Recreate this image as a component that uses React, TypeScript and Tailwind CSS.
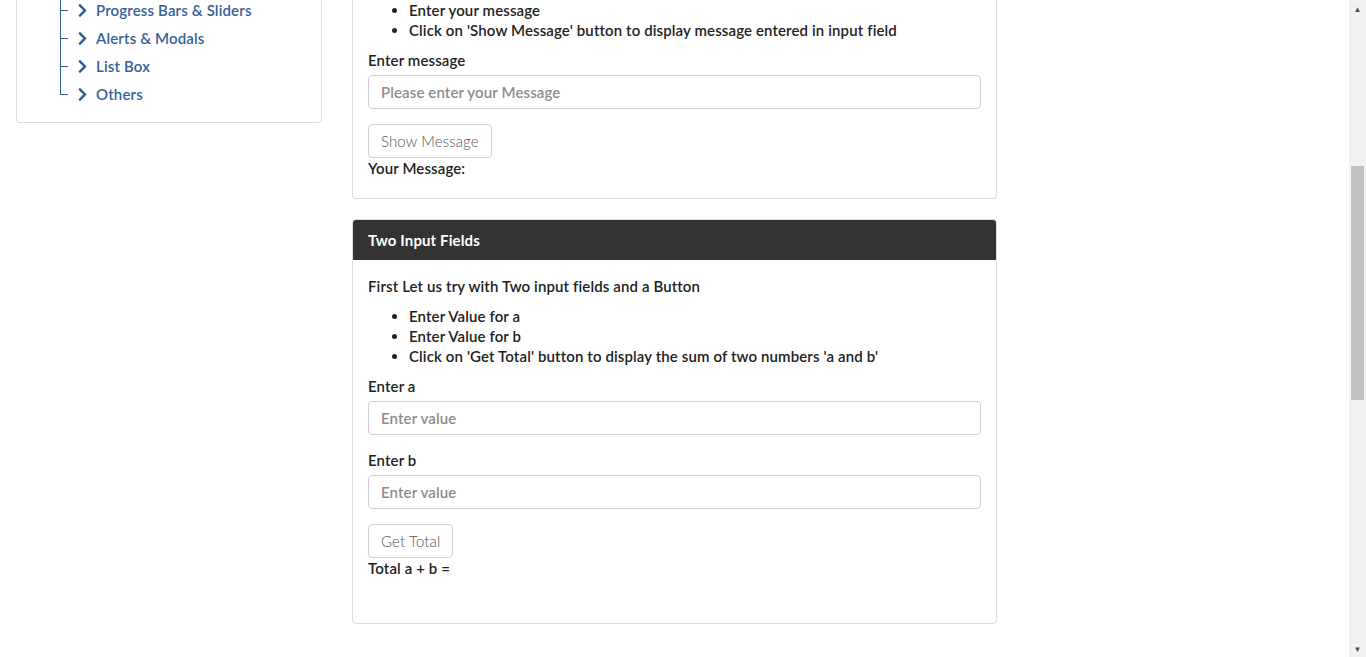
import { FaChevronRight } from "react-icons/fa";

const navItems = ["Progress Bars & Sliders", "Alerts & Modals", "List Box", "Others"];

function Sidebar() {
  return (
    <div className="w-[306px] shrink-0">
      <div className="-mt-[4px] rounded-b border border-t-0 border-[#dcdcdc] pb-[14px] pl-[43px]">
        <ul className="relative">
          {navItems.map((item, i) => (
            <li key={item} className="relative flex h-[28px] items-center pl-[15px]">
              <span
                className={
                  i === navItems.length - 1
                    ? "absolute left-0 top-0 h-[15px] w-px bg-[#2c5a94]"
                    : "absolute left-0 top-0 h-full w-px bg-[#2c5a94]"
                }
              />
              <span className="absolute left-0 top-[14px] h-px w-[8px] bg-[#2c5a94]" />
              <FaChevronRight className="size-[15px] text-[#2c5a94]" />
              <span className="ml-[6px] text-[15px] font-semibold tracking-[0.15px] text-[#36609b]">
                {item}
              </span>
            </li>
          ))}
        </ul>
      </div>
    </div>
  );
}

function Field({ label, placeholder }: { label: string; placeholder: string }) {
  return (
    <div>
      <label className="block h-[20px] text-[15px] font-semibold leading-[20px]">{label}</label>
      <input
        placeholder={placeholder}
        className="mt-[5px] block h-[34px] w-full rounded border border-[#cfcfcf] px-[12px] text-[15px] font-semibold placeholder:text-[#8c8c8c]"
      />
    </div>
  );
}

function OutlineButton({ children }: { children: string }) {
  return (
    <button
      type="button"
      className="h-[34px] rounded border border-[#cfcfcf] bg-white px-[12px] text-[15px] font-light text-[#555]"
    >
      {children}
    </button>
  );
}

export default function App() {
  return (
    <div
      className="flex h-[657px] overflow-hidden bg-white tracking-[0.12px] text-[#222]"
      style={{ fontFamily: "Lato, 'Open Sans', sans-serif" }}
    >
      <div className="flex flex-1 gap-[30px] pl-[16px]">
        <Sidebar />

        <div className="flex w-[645px] shrink-0 flex-col gap-[20px]">
          <div className="-mt-[1px] rounded-b border border-t-0 border-[#dcdcdc] px-[15px] pb-[20px]">
            <ul className="mt-[1px] list-disc pl-[41px] text-[15px] font-semibold leading-[20px]">
              <li>Enter your message</li>
              <li>Click on 'Show Message' button to display message entered in input field</li>
            </ul>
            <div className="mt-[10px]">
              <Field label="Enter message" placeholder="Please enter your Message" />
            </div>
            <div className="mt-[15px]">
              <OutlineButton>Show Message</OutlineButton>
            </div>
            <p className="h-[20px] text-[15px] font-semibold leading-[20px]">Your Message:</p>
          </div>

          <div className="overflow-hidden rounded border border-[#dcdcdc]">
            <div className="flex h-[40px] items-center bg-[#333] px-[15px] text-[15px] font-bold text-white">
              Two Input Fields
            </div>
            <div className="px-[15px] pb-[45px] pt-[16px] text-[15px] font-semibold leading-[20px]">
              <p>First Let us try with Two input fields and a Button</p>
              <ul className="mt-[10px] list-disc pl-[41px]">
                <li>Enter Value for a</li>
                <li>Enter Value for b</li>
                <li>Click on 'Get Total' button to display the sum of two numbers 'a and b'</li>
              </ul>
              <div className="mt-[10px]">
                <Field label="Enter a" placeholder="Enter value" />
              </div>
              <div className="mt-[15px]">
                <Field label="Enter b" placeholder="Enter value" />
              </div>
              <div className="mt-[15px]">
                <OutlineButton>Get Total</OutlineButton>
              </div>
              <p>Total a + b =</p>
            </div>
          </div>
        </div>
      </div>

      <div className="flex w-[17px] shrink-0 flex-col items-center bg-[#f1f1f1]">
        <div className="flex h-[17px] items-center text-[8px] text-[#505050]">▲</div>
        <div className="mt-[149px] h-[234px] w-[13px] bg-[#c1c1c1]" />
        <div className="flex-1" />
        <div className="flex h-[17px] items-center text-[8px] text-[#505050]">▼</div>
      </div>
    </div>
  );
}
